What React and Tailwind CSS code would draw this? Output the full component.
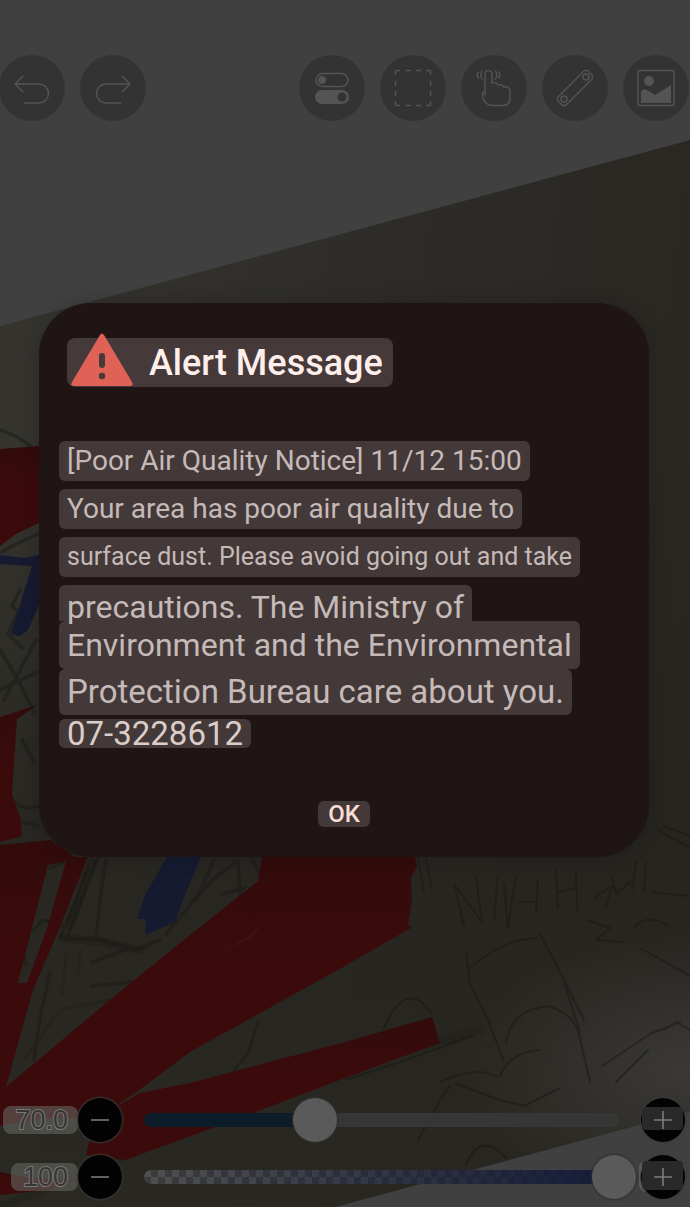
import { useState } from 'react';

const lines = [
  { text: '[Poor Air Quality Notice] 11/12 15:00', style: 'mb-2 h-10 text-[28px] rounded-md' },
  { text: 'Your area has poor air quality due to', style: 'mb-2 h-10 text-[28px] rounded-md' },
  { text: 'surface dust. Please avoid going out and take', style: 'mb-2 h-10 text-[25px] rounded-md' },
  { text: 'precautions. The Ministry of', style: 'relative z-10 h-9 pt-2 text-[32px] rounded-t-md' },
  { text: 'Environment and the Environmental', style: 'h-12 text-[32px] rounded-md' },
  { text: 'Protection Bureau care about you.', style: 'mb-1 h-[46px] text-[33px] rounded-md' },
  { text: '07-3228612', style: 'h-[29px] text-[33px] text-[#dccdca] rounded-md' },
];

function Icon({ children }) {
  return (
    <svg viewBox="0 0 66 66" className="size-full" fill="none" stroke="#545454" strokeWidth="1.4" strokeLinecap="round" strokeLinejoin="round">
      {children}
    </svg>
  );
}

function ToolButton({ label, children }) {
  return (
    <button aria-label={label} className="size-[66px] shrink-0 rounded-full bg-[#333333]">
      <Icon>{children}</Icon>
    </button>
  );
}

function Artwork() {
  return (
    <svg viewBox="0 0 690 1207" preserveAspectRatio="none" className="absolute inset-0 size-full" aria-hidden="true">
      <defs>
        <linearGradient id="paper" x1="0" y1="0.2" x2="1" y2="0.4">
          <stop offset="0" stopColor="#35342f" />
          <stop offset="0.5" stopColor="#2d2c28" />
          <stop offset="1" stopColor="#2a2722" />
        </linearGradient>
        <linearGradient id="shade" x1="0" y1="0" x2="0" y2="1">
          <stop offset="0.3" stopColor="#25241f" stopOpacity="0" />
          <stop offset="0.65" stopColor="#25241f" stopOpacity="0.8" />
          <stop offset="1" stopColor="#28261f" stopOpacity="0.8" />
        </linearGradient>
        <radialGradient id="glow" gradientUnits="userSpaceOnUse" cx="690" cy="1070" r="230" gradientTransform="translate(0 428) scale(1 0.6)">
          <stop offset="0" stopColor="#3a3936" />
          <stop offset="1" stopColor="#3a3936" stopOpacity="0" />
        </radialGradient>
        <linearGradient id="red" x1="0" y1="0" x2="0" y2="1">
          <stop offset="0" stopColor="#320b0b" />
          <stop offset="0.4" stopColor="#3b0b0c" />
        </linearGradient>
      </defs>
      <path d="M0 326L690 140V1111L335 1207H0Z" fill="url(#paper)" />
      <path d="M0 326L690 140V1111L335 1207H0Z" fill="url(#shade)" />
      <path d="M0 326L690 140V1111L335 1207H0Z" fill="url(#glow)" />

      {/* pencil lines */}
      <g fill="none" stroke="#191814" strokeLinecap="round" strokeLinejoin="round">
        <g strokeWidth="3.5" opacity="0.45">
          <path d="M0 430Q18 436 30 446M38 534L12 546L2 552M20 590L12 606L18 612L8 634L22 648M0 650L18 680L34 712M36 640L4 700M0 690L38 672M22 740L34 762M12 800Q24 812 38 806M16 820L38 826" />
          <path d="M50 868L66 861M88 868L74 905L60 938M98 858L82 898L68 934M106 860L100 900L96 940M60 938L100 940L136 950L160 940M34 930L42 920L64 926M26 965L22 950M50 972L40 1018L34 1060M92 986L132 982M92 962L130 948M166 934L190 905L212 880L236 862M196 900L206 878L214 860M222 894L244 888M238 862L240 894M252 858L258 872" />
          <path d="M24 1060L60 1010L110 1000M66 955L62 995M80 950L78 975" opacity="0.5" />
        </g>
        <path d="M92 862L70 925M64 938L104 942L140 950" strokeWidth="9" opacity="0.3" />
        <g strokeWidth="2" opacity="0.5">
          <path d="M464 926L454 884L482 922L476 876M494 920L498 878M504 884L508 928L516 876M520 902H536M538 880L536 912M556 870L558 908M558 892L576 888M576 872L577 912M594 898L612 886L606 908M612 876L616 894L630 882M636 862L632 890M646 862L644 890M652 892L690 896" />
          <path d="M418 858L424 892M426 860L432 888M468 970Q500 940 536 938M466 954L470 984L488 1020L504 1062M540 934L562 976L584 1020M562 976L580 1032M506 1044Q510 1010 548 1006Q570 1012 578 1030L590 1082M500 1076Q510 1052 540 1050M586 920L610 928L596 940L624 942M634 928Q646 912 668 926M640 948L690 976M658 830L690 848M664 826L690 836" />
          <path d="M384 1028Q402 986 424 1004L432 1014M345 1080L400 1062L472 1036M440 1082Q480 1064 498 1078M456 1084L500 1100L524 1106L560 1088M602 1066L650 1034L680 1022M616 1082L648 1050M418 1140L440 1100L450 1086M258 1022L248 1054L234 1070M466 1165Q480 1130 506 1158M664 1030L676 1022L690 1030" />
        </g>
        <path d="M110 1150L260 1090L480 1030M0 1207L140 1150" strokeWidth="9" opacity="0.22" />
      </g>

      {/* marker */}
      <g fill="url(#red)">
        <path d="M0 449L39 446V523L16 534L0 546Z" />
        <path d="M0 717L37 705L17 719L12 794L21 820L22 836L0 842Z" />
        <path fillRule="evenodd" d="M0 845L50 840L75 857H88L58 932L33 990L6 1087L0 1096ZM48 865L66 861L48 925L27 983H18Z" />
        <path d="M262 857H415L417 866L411 878L412 900L408 924L411 928L345 966L190 1052L142 1088L120 1103L118 1117L40 1119L0 1126V1092L106 1003L175 947L258 881Z" />
        <path d="M432 1017L440 1043L345 1078L240 1118L125 1160L86 1155L94 1120L140 1093L190 1083L345 1042Z" />
        <path d="M0 1172L30 1178L74 1180L50 1190L0 1195Z" />
      </g>
      <g fill="#151a31">
        <path d="M0 555L25 558L39 555V605L28 630L20 636L11 634L32 566L0 564Z" />
        <path d="M167 857H201L186 892L175 922L145 935L146 919L137 919L145 895Z" />
      </g>
      <path d="M224 950L244 938L264 923L252 938L226 950Z" fill="#4d221e" opacity="0.3" />
    </svg>
  );
}

function StepButton({ label, plus, halo }) {
  return (
    <button aria-label={label} className="size-11 shrink-0 rounded-full bg-[#030303] shadow-[0_0_2px_1px_#3c3b39]">
      <svg viewBox="0 0 44 44" className="size-full overflow-visible">
        {halo && <path d="M6 6Q-2 6 -2 13V29Q-2 36 5 37A22 22 0 0 1 6 6Z" fill="#5a5a5a" />}
        {plus && <rect x="1" y={halo ? 6 : 9} width="41" height={halo ? 29 : 23} rx="4" fill="#292929" />}
        <path d={plus ? 'M13 22H31M22 13V31' : 'M13 22H31'} stroke="#7b7b7b" strokeWidth="1.6" />
      </svg>
    </button>
  );
}

function SliderRow({ name, label, start, checker }) {
  const [value, setValue] = useState(start);
  return (
    <div className="flex items-center">
      <div className="flex w-[78px] shrink-0 justify-end">
        <output className="h-7 rounded-lg bg-[#666660]/60 pr-2.5 pl-3 text-[27px] leading-7 text-[#363636] [-webkit-text-stroke:2px_#777777] [paint-order:stroke_fill]">
          {label}
        </output>
      </div>
      <StepButton label={`Decrease ${name}`} />
      <div className="relative flex h-11 flex-1 items-center px-[22px]">
        {checker ? (
          <svg className="h-3.5 w-full rounded-full" aria-hidden="true">
            <defs>
              <pattern id="checks" width="14" height="14" patternUnits="userSpaceOnUse">
                <rect width="14" height="14" fill="#505050" />
                <path d="M0 7H7V0H14V7H7V14H0Z" fill="#3c3c3c" />
              </pattern>
              <linearGradient id="ink">
                <stop offset="0" stopColor="#141b38" stopOpacity="0" />
                <stop offset="1" stopColor="#141b38" />
              </linearGradient>
            </defs>
            <rect width="100%" height="100%" fill="url(#checks)" />
            <rect width="100%" height="100%" fill="url(#ink)" />
          </svg>
        ) : (
          <div className="h-3.5 w-full overflow-hidden rounded-full bg-[#363636]">
            <div className="h-full bg-[#0d1c2a]" style={{ width: `${value / 10}%` }} />
          </div>
        )}
        <input
          type="range"
          aria-label={name}
          min="0"
          max="1000"
          value={value}
          onChange={(e) => setValue(Number(e.target.value))}
          className="absolute inset-0 h-11 w-full appearance-none bg-transparent [&::-webkit-slider-thumb]:size-11 [&::-webkit-slider-thumb]:appearance-none [&::-webkit-slider-thumb]:rounded-full [&::-webkit-slider-thumb]:bg-[#5a5a5a] [&::-webkit-slider-thumb]:shadow-[0_0_2px_1px_#302f2d]"
        />
      </div>
      <StepButton label={`Increase ${name}`} plus halo={checker} />
    </div>
  );
}

export default function App() {
  return (
    <div className="relative flex min-h-screen flex-col overflow-hidden bg-[#404040] font-['Roboto',sans-serif]">
      <Artwork />

      <header className="relative -ml-px flex justify-between pt-[55px] pr-px">
        <div className="flex gap-[15px]">
          <ToolButton label="Undo">
            <path d="M24 21L16 29L24 37M16 29H40A9.500 9.500 0 0 1 40 48H25" />
          </ToolButton>
          <ToolButton label="Redo">
            <path d="M42 21L50 29L42 37M50 29H26A9.500 9.500 0 0 0 26 48H41" />
          </ToolButton>
        </div>
        <div className="flex gap-[15px]">
          <ToolButton label="Settings">
            <rect x="17" y="18.500" width="32" height="13" rx="6.500" />
            <circle cx="23" cy="25" r="4" fill="#545454" stroke="none" />
            <rect x="16" y="35" width="34" height="14" rx="7" fill="#545454" stroke="none" />
            <circle cx="43" cy="42" r="4.500" fill="#333333" stroke="none" />
          </ToolButton>
          <ToolButton label="Select area">
            <path strokeLinecap="butt" d="M20 15.500H15.500V20M46 15.500H50.500V20M15.500 46V50.500H20M50.500 46V50.500H46M26 15.500H31M36 15.500H41M26 50.500H31M36 50.500H41M15.500 26V31M15.500 36V41M50.500 26V31M50.500 36V41" />
          </ToolButton>
          <ToolButton label="Touch gestures">
            <path d="M24 36V19C24 14.500 31 14.500 31 19V28C34 27 36.500 28 37 30C40 29 42 30 42.500 32C46 31 49 33 49 36V43C49 48 46 50.500 42 50.500H31C26 50.500 24 48 22.500 44C21 40 21 37 24 36ZM24 36V40" />
            <path d="M21 16Q18.500 20 21 24M17.500 17Q15 20 17.500 23M34.500 16Q37 20 34.500 24M38 17Q40 20 38 23" />
          </ToolButton>
          <ToolButton label="Ruler">
            <path d="M16 42L42 16Q44 14.500 46 16L50 20Q51.500 22 50 24L24 50Q22 51 20 50L16 46Q14.500 44 16 42Z" />
            <circle cx="44" cy="22" r="3" />
            <circle cx="22" cy="44" r="3" />
          </ToolButton>
          <ToolButton label="Image">
            <rect x="15" y="15.500" width="36" height="35" rx="2" />
            <circle cx="26" cy="26" r="5" fill="#545454" stroke="none" />
            <path d="M18 36L22 34L32 40L48 30V48H18Z" fill="#545454" stroke="none" />
          </ToolButton>
        </div>
      </header>

      <main className="relative flex-1 pt-[182px] pr-[41px] pl-[39px]">
        <section role="alertdialog" aria-labelledby="alert-title" className="rounded-[52px] bg-[#1f1514] px-5 pt-[35px] pb-[30px] shadow-[0_0_20px_rgba(0,0,0,0.2)]">
          <div className="ml-2 flex h-[49px] w-fit items-center rounded-lg bg-[#453a39] pr-2.5 pl-1">
            <svg viewBox="0 0 62 54" className="h-[54px] w-[62px] shrink-0 self-end" aria-hidden="true">
              <path d="M29 2Q31 -1 33 2L61 49Q63 53 59 53H3Q-1 53 1 49Z" fill="#e06156" />
              <path d="M31 23V32" stroke="#453a39" strokeWidth="6" strokeLinecap="round" />
              <circle cx="31" cy="43" r="3.200" fill="#453a39" />
            </svg>
            <h1 id="alert-title" className="ml-4 text-4xl font-medium whitespace-nowrap text-[#ffefec]">Alert Message</h1>
          </div>

          <div className="mt-[54px] flex flex-col items-start text-[#c6bab9]">
            {lines.map((line) => (
              <p key={line.text} className={`flex items-center bg-[#433938] px-2 whitespace-nowrap ${line.style}`}>
                {line.text}
              </p>
            ))}
          </div>

          <div className="mt-[53px] flex justify-center">
            <button className="h-[26px] rounded-md bg-[#433938] px-2.5 text-2xl leading-[26px] font-medium text-[#fbdcd7]">OK</button>
          </div>
        </section>
      </main>

      <footer className="relative flex flex-col gap-[13px] pr-[5px] pb-2 font-['Liberation_Sans',sans-serif]">
        <SliderRow name="Brush size" label="70.0" start={359} />
        <SliderRow name="Opacity" label="100" start={990} checker />
      </footer>
    </div>
  );
}
